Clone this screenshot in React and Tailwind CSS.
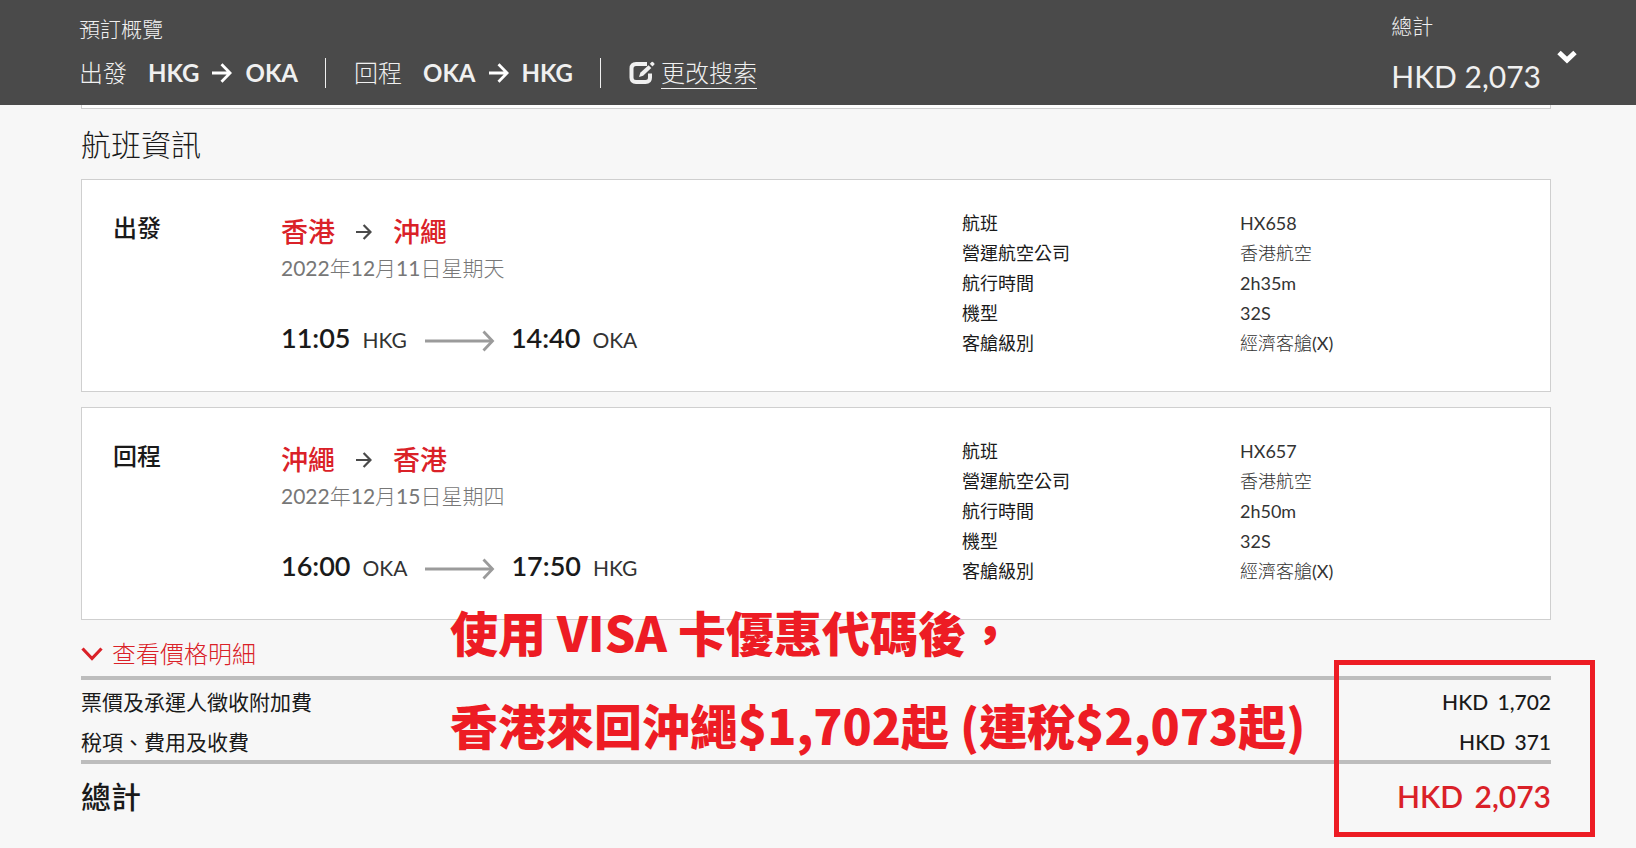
const flights = [
  {
    id: 'depart',
    label: '出發',
    from: '香港',
    to: '沖繩',
    date: '2022年12月11日星期天',
    start: { time: '11:05', code: 'HKG' },
    end: { time: '14:40', code: 'OKA' },
    details: [
      ['航班', 'HX658'],
      ['營運航空公司', '香港航空'],
      ['航行時間', '2h35m'],
      ['機型', '32S'],
      ['客艙級別', '經濟客艙(X)'],
    ],
  },
  {
    id: 'return',
    label: '回程',
    from: '沖繩',
    to: '香港',
    date: '2022年12月15日星期四',
    start: { time: '16:00', code: 'OKA' },
    end: { time: '17:50', code: 'HKG' },
    details: [
      ['航班', 'HX657'],
      ['營運航空公司', '香港航空'],
      ['航行時間', '2h50m'],
      ['機型', '32S'],
      ['客艙級別', '經濟客艙(X)'],
    ],
  },
]

const fees = [
  { name: '票價及承運人徵收附加費', amount: '1,702' },
  { name: '稅項、費用及收費', amount: '371' },
]

function Arrow({ className }) {
  return (
    <svg viewBox="0 0 20 20" className={className} fill="none" stroke="currentColor" strokeWidth="2.8" aria-hidden="true">
      <path d="M0 10h17.5M9.5 1.2l8.6 8.8-8.6 8.8" />
    </svg>
  )
}

function LongArrow() {
  return (
    <svg viewBox="0 0 72 22" className="w-[72px] h-[22px] text-[#9b9b9b]" fill="none" stroke="currentColor" aria-hidden="true">
      <path d="M2 11h67" strokeWidth="3.2" />
      <path d="M60.500 1.500l9 9.500-9 9.500" strokeWidth="2.8" />
    </svg>
  )
}

function EditIcon() {
  return (
    <svg viewBox="0 0 26 24" className="w-[26px] h-6" fill="none" stroke="currentColor" aria-hidden="true">
      <path d="M18 3H7Q2.500 3 2.500 7.500v9q0 4.500 4.500 4.500h9.500q4.500 0 4.500-4.500V12.500" strokeWidth="4" />
      <path d="M10 16l1.300-4.200 8.200-7.600 2.800 2.900-8.200 7.600z" fill="currentColor" stroke="none" />
      <path d="M20.700 3l1.900-1.900q.8-.7 1.600.1l1 1q.8.800 0 1.500L23.400 5.600z" fill="currentColor" stroke="none" />
      <path d="M19.500 2.200l4.500 4.600" stroke="#4a4a4a" strokeWidth="1" />
    </svg>
  )
}

// Light Chinese glyphs with regular-weight latin letters and digits
function Mixed({ text }) {
  return text.split(/([\x20-\x7e]+)/).filter(Boolean).map((part, i) => (
    <span key={i} className={/^[\x20-\x7e]/.test(part) ? 'font-normal' : 'font-light'}>{part}</span>
  ))
}

function Amount({ value }) {
  return <>HKD <span className="ml-1">{value}</span></>
}

function FlightCard({ flight }) {
  return (
    <article className="grid grid-cols-[168px_1fr_557px] h-[213px] px-[31px] pt-7 bg-white border border-[#cfcfcf]">
      <h3 className="pt-0.5 text-[24px] leading-[36px] font-medium">{flight.label}</h3>
      <div>
        <div className="flex items-center pt-[6px] text-[27px] leading-[36px] font-medium text-[#da2128]">
          <span>{flight.from}</span>
          <Arrow className="w-4 h-4 mx-[21px] text-[#4a4a4a]" />
          <span>{flight.to}</span>
        </div>
        <p className="text-[21px] leading-[36px] text-[#777]"><Mixed text={flight.date} /></p>
        <div className="flex items-center mt-8 leading-[36px]">
          <span className="text-[27px] font-semibold">{flight.start.time}</span>
          <span className="ml-3 mt-1 text-[21px] text-[#333]">{flight.start.code}</span>
          <span className="mx-4 mt-1.5"><LongArrow /></span>
          <span className="text-[27px] font-semibold">{flight.end.time}</span>
          <span className="ml-3 mt-1 text-[21px] text-[#333]">{flight.end.code}</span>
        </div>
      </div>
      <dl className="text-[18px] leading-[30px]">
        {flight.details.map(([name, value]) => (
          <div key={name} className="grid grid-cols-[278px_1fr]">
            <dt>{name}</dt>
            <dd className="text-[#333]"><Mixed text={value} /></dd>
          </div>
        ))}
      </dl>
    </article>
  )
}

export default function App() {
  return (
    <div className="relative min-h-screen overflow-hidden bg-[#f7f7f7] text-[#1a1a1a] font-['Lato','Noto_Sans_CJK_TC',sans-serif]">
      {/* Booking bar */}
      <header className="flex justify-between h-[105px] pl-[79px] pr-[59px] bg-[#4a4a4a] text-[#f0f0f0]">
        <div className="pt-[14px]">
          <h1 className="text-[21px] leading-[30px] font-light">預訂概覽</h1>
          <div className="flex items-center mt-[11px] text-[24px] leading-[36px] whitespace-nowrap">
            <span className="font-light">出發</span>
            <b className="ml-[21px]">HKG</b>
            <Arrow className="w-5 h-5 mx-[13px] text-white" />
            <b>OKA</b>
            <span className="w-px h-[30px] ml-[27px] mr-7 bg-[#f0f0f0]" />
            <span className="font-light">回程</span>
            <b className="ml-[21px]">OKA</b>
            <Arrow className="w-5 h-5 mx-[13px] text-white" />
            <b>HKG</b>
            <span className="w-px h-[30px] ml-[27px] mr-7 bg-[#f0f0f0]" />
            <a href="#search" className="flex items-center gap-1.5 font-light">
              <EditIcon />
              <span className="leading-[30px] border-b border-[#f0f0f0]">更改搜索</span>
            </a>
          </div>
        </div>
        <div className="flex gap-4">
          <div className="pt-[11px]">
            <p className="text-[21px] leading-[30px] font-light">總計</p>
            <p className="mt-[17px] text-[30px] leading-[36px]">HKD 2,073</p>
          </div>
          <button type="button" aria-label="展開" className="self-start mt-[50px] text-white">
            <svg viewBox="0 0 20 14" className="w-5 h-[14px]" fill="none" stroke="currentColor" strokeWidth="5">
              <path d="M2 2.500l8 7.500 8-7.500" />
            </svg>
          </button>
        </div>
      </header>

      <main className="ml-[81px] mr-[85px]">
        <div className="h-1 bg-white border-x border-b border-[#cfcfcf]" />

        <h2 className="pt-[17px] pb-[17px] text-[30px] leading-[36px] font-light">航班資訊</h2>
        <div className="space-y-[15px]">
          {flights.map((flight) => (
            <FlightCard key={flight.id} flight={flight} />
          ))}
        </div>

        {/* Price summary */}
        <section className="relative pt-4">
          <button type="button" className="flex items-center gap-[9px] mb-1 text-[24px] leading-[36px] font-light text-[#da2128]">
            <svg viewBox="0 0 22 16" className="w-[22px] h-4" fill="none" stroke="currentColor" strokeWidth="3.2" aria-hidden="true">
              <path d="M1.500 2.500l9.500 10 9.500-10" />
            </svg>
            查看價格明細
          </button>
          <table className="w-full">
            <tbody className="border-y-4 border-[#bdbdbd] text-[21px] leading-[30px]">
              {fees.map((fee) => (
                <tr key={fee.name} className="h-[42px]">
                  <th scope="row" className="pt-1 text-left font-normal">{fee.name}</th>
                  <td className="pt-1 text-right font-medium"><Amount value={fee.amount} /></td>
                </tr>
              ))}
            </tbody>
            <tfoot className="text-[30px] leading-[36px]">
              <tr>
                <th scope="row" className="pt-[14px] text-left font-medium">總計</th>
                <td className="pt-[14px] text-right font-semibold text-[#da2128]"><Amount value="2,073" /></td>
              </tr>
            </tfoot>
          </table>

          {/* Promo note and highlight frame over the totals */}
          <div className="absolute left-[369px] top-[-35px] text-[48px] leading-[93px] font-black text-[#ed1c24] whitespace-nowrap font-['Noto_Sans_CJK_TC',sans-serif]">
            <p>使用 VISA 卡優惠代碼後，</p>
            <p>香港來回沖繩$1,702起 (連稅$2,073起)</p>
          </div>
          <div className="absolute top-10 -right-11 w-[261px] h-[177px] border-5 border-[#ed1c24]" />
        </section>
      </main>
    </div>
  )
}
